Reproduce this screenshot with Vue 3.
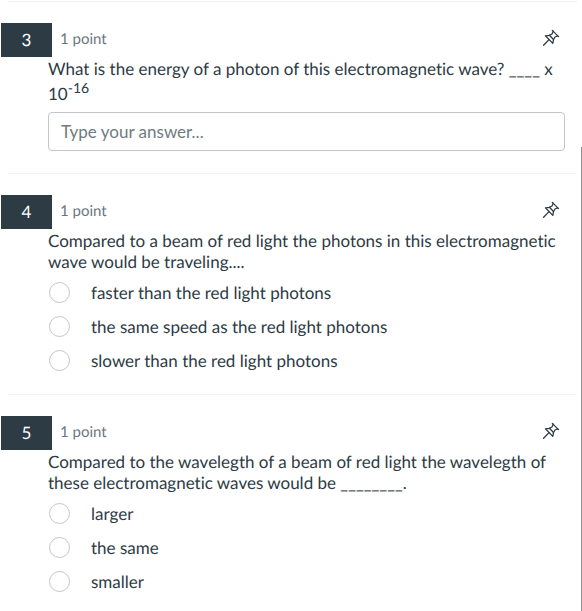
<script setup>
import { reactive } from 'vue'

const questions = [
  {
    number: 3,
    prompt: 'What is the energy of a photon of this electromagnetic wave? ____ x 10',
    exponent: '-16',
  },
  {
    number: 4,
    prompt: 'Compared to a beam of red light the photons in this electromagnetic wave would be traveling....',
    options: [
      'faster than the red light photons',
      'the same speed as the red light photons',
      'slower than the red light photons',
    ],
  },
  {
    number: 5,
    prompt: 'Compared to the wavelegth of a beam of red light the wavelegth of these electromagnetic waves would be ________.',
    options: ['larger', 'the same', 'smaller'],
  },
]

const answers = reactive({})
</script>

<template>
  <main class="quiz">
    <section v-for="q in questions" :key="q.number" class="question">
      <hr class="rule" />
      <header class="head">
        <span class="badge">{{ q.number }}</span>
        <span class="points">1 point</span>
        <button class="pin" type="button" aria-label="Pin question">
          <svg viewBox="0 0 18 18" width="18" height="18" fill="none" stroke="currentColor" stroke-width="1.3" stroke-linejoin="round" stroke-linecap="round">
            <path d="M10.3 1.4 L16.5 7.6" />
            <path d="M11.2 2.3 L10 5 L7.4 6.3 L3.4 6.8 L10.8 14.4 L11.5 10.5 L13 8 L15.7 6.8" />
            <path d="M7.4 6.3 L11.5 10.5" />
            <path d="M7 10.6 L1.6 16.2" />
          </svg>
        </button>
      </header>
      <div class="body">
        <p :id="`prompt-${q.number}`" class="prompt">{{ q.prompt }}<sup v-if="q.exponent">{{ q.exponent }}</sup></p>
        <div v-if="q.options" class="options" role="radiogroup" :aria-labelledby="`prompt-${q.number}`">
          <label v-for="option in q.options" :key="option" class="option">
            <input v-model="answers[q.number]" class="radio" type="radio" :name="`question-${q.number}`" :value="option" />
            <span>{{ option }}</span>
          </label>
        </div>
        <input
          v-else
          v-model="answers[q.number]"
          class="answer"
          type="text"
          placeholder="Type your answer..."
          :aria-labelledby="`prompt-${q.number}`"
        />
      </div>
    </section>
    <div class="scroll-thumb"></div>
  </main>
</template>

<style>
body {
  margin: 0;
  background: #fff;
}
</style>

<style scoped>
.quiz {
  position: relative;
  box-sizing: border-box;
  min-height: 100vh;
  padding: 1px 5px 0 1px;
  color: #2d3b45;
  font-family: Lato, "Liberation Sans", sans-serif;
  font-size: 17px;
  font-variant-ligatures: none;
  line-height: 21px;
  text-rendering: geometricPrecision;
}

.question {
  padding-bottom: 16px;
}

.question:last-of-type {
  padding-bottom: 0;
}

.rule {
  height: 1px;
  margin: 0 0 21px 7px;
  border: 0;
  background: #f1f2f3;
}

.head {
  display: flex;
  align-items: center;
  padding-right: 17px;
}

.badge {
  width: 51px;
  background: #2d3b45;
  color: #fff;
  line-height: 34px;
  text-align: center;
}

.points {
  flex: 1;
  padding: 0 0 1px 8px;
  color: #6b7780;
  font-size: 15px;
}

.pin {
  display: flex;
  padding: 0 0 4px;
  border: 0;
  background: none;
  color: #2d3b45;
  cursor: pointer;
}

.body {
  padding: 1px 12px 0 47px;
}

.prompt {
  margin: 0;
}

sup {
  font-size: 14px;
  line-height: 18px;
}

.options {
  padding-top: 4px;
}

.option {
  display: flex;
  align-items: center;
  gap: 21px;
  height: 34px;
}

.radio {
  appearance: none;
  box-sizing: border-box;
  width: 21px;
  height: 21px;
  margin: 0 0 0 1px;
  border: 1px solid #c2c6ca;
  border-radius: 50%;
  background: #fff;
}

.radio:checked {
  border: 6px solid #2d3b45;
}

.answer {
  display: block;
  box-sizing: border-box;
  width: 100%;
  height: 39px;
  margin: 8px 0 6px;
  padding: 0 12px;
  border: 1px solid #c2c6ca;
  border-radius: 4px;
  background: #fff;
  color: inherit;
  font: inherit;
}

.answer::placeholder {
  color: #6f7a82;
  opacity: 1;
}

.scroll-thumb {
  position: absolute;
  top: 147px;
  right: 0;
  bottom: 0;
  width: 1px;
  background: #929292;
}
</style>
